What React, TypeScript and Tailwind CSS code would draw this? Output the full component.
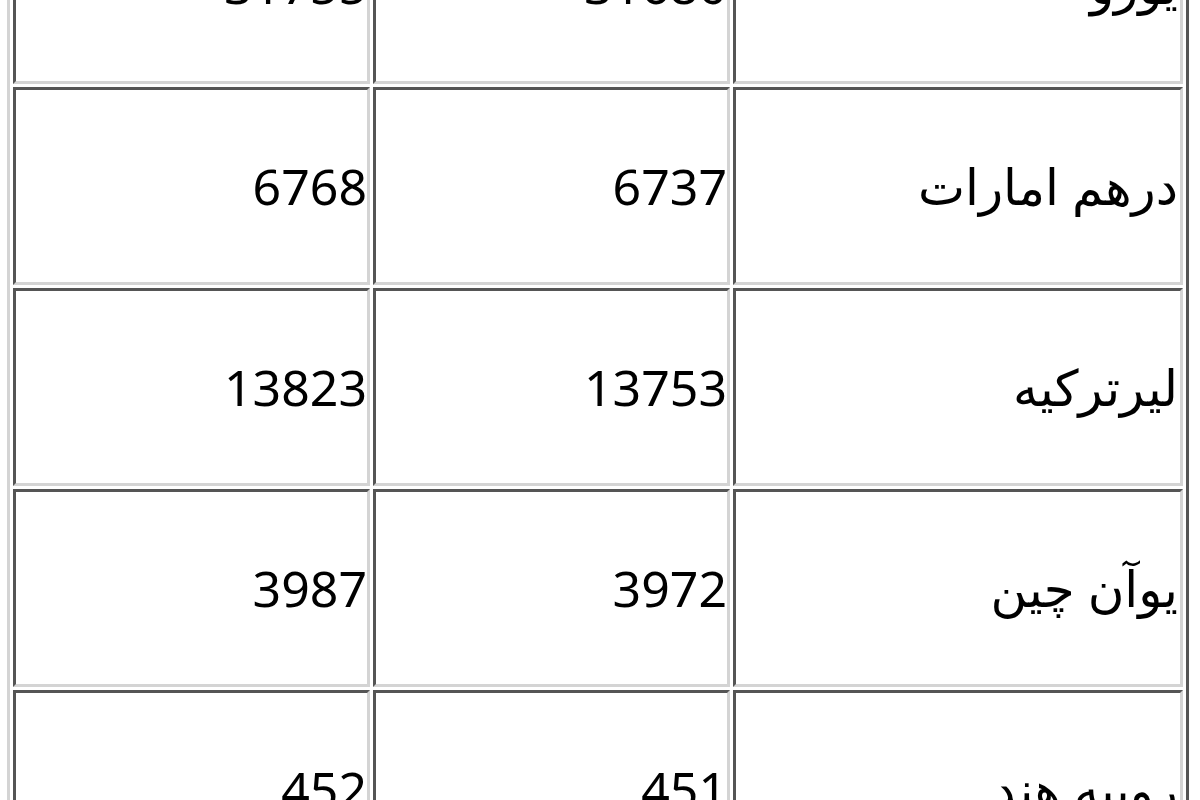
import React from 'react';

type Rate = {
  name: string;
  sell: string;
  buy: string;
};

const rates: Rate[] = [
  { name: 'یورو', sell: '31755', buy: '31680' },
  { name: 'درهم امارات', sell: '6768', buy: '6737' },
  { name: 'لیرترکیه', sell: '13823', buy: '13753' },
  { name: 'یوآن چین', sell: '3987', buy: '3972' },
  { name: 'روپیه هند', sell: '452', buy: '451' },
];

const cellClass =
  'h-[198px] border-[3px] border-t-[#555] border-l-[#555] border-r-[#d4d4d4] border-b-[#d4d4d4] px-0 py-0 text-right align-middle';

const App: React.FC = () => {
  return (
    <div className="h-[800px] w-[1200px] overflow-hidden bg-white">
      <table
        className="-mt-[120px] ml-[7px] w-[1182px] table-fixed border-separate border-spacing-[3px] border-[3px] border-t-[#d4d4d4] border-l-[#d4d4d4] border-r-[#555] border-b-[#555] text-black"
        style={{ fontFamily: '"Noto Sans", "DejaVu Sans", sans-serif' }}
      >
        <colgroup>
          <col className="w-[357px]" />
          <col className="w-[357px]" />
          <col className="w-[450px]" />
        </colgroup>
        <tbody>
          {rates.map((rate) => (
            <tr key={rate.name}>
              <td className={`${cellClass} text-[50px] leading-none`}>{rate.sell}</td>
              <td className={`${cellClass} text-[50px] leading-none`}>{rate.buy}</td>
              <td dir="rtl" className={`${cellClass} text-[50px] leading-none`}>
                <span className="pr-[2px]">{rate.name}</span>
              </td>
            </tr>
          ))}
        </tbody>
      </table>
    </div>
  );
};

export default App;
